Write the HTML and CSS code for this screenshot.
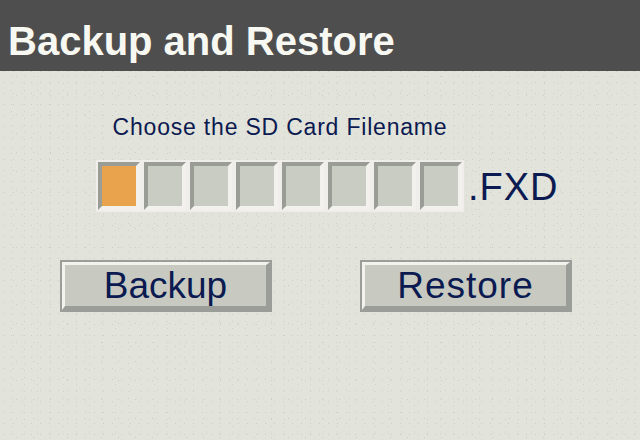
FILE: index.html
```html
<!DOCTYPE html>
<html>
<head>
<meta charset="utf-8">
<link rel="stylesheet" href="styles.css">
</head>
<body>
<div class="screen">
  <header class="titlebar"><h1 class="title">Backup and Restore</h1></header>
  <main class="content">
    <div class="picker">
      <div class="prompt">Choose the SD Card Filename</div>
      <div class="filename-row">
        <div class="slots">
          <div class="slot active"></div>
          <div class="slot"></div>
          <div class="slot"></div>
          <div class="slot"></div>
          <div class="slot"></div>
          <div class="slot"></div>
          <div class="slot"></div>
          <div class="slot"></div>
        </div>
        <span class="ext">.FXD</span>
      </div>
    </div>
    <div class="actions">
      <div class="btn"><div class="btn-face">Backup</div></div>
      <div class="btn"><div class="btn-face restore">Restore</div></div>
    </div>
  </main>
</div>
</body>
</html>
```

FILE: styles.css
```css
html, body {
  margin: 0;
  padding: 0;
}
body {
  width: 640px;
  height: 440px;
  overflow: hidden;
  font-family: "Liberation Sans", Arial, sans-serif;
}
.screen {
  width: 640px;
  height: 440px;
  background-color: #e2e3db;
  background-image:
    radial-gradient(circle, #cdcec6 0.7px, transparent 1px),
    radial-gradient(circle, #d0d1c9 0.7px, transparent 1px),
    radial-gradient(circle, #cccdc5 0.7px, transparent 1px);
  background-size: 9px 11px, 13px 7px, 17px 19px;
  background-position: 0 0, 5px 3px, 8px 10px;
}
.titlebar {
  height: 71px;
  box-sizing: border-box;
  background: #4e4e4e;
  padding: 22px 0 0 8px;
}
.title {
  margin: 0;
  font-size: 40px;
  line-height: 39px;
  font-weight: bold;
  color: #f8f8f2;
}
.content {
  padding-top: 45px;
}
.picker {
  margin-left: 96px;
  width: 368px;
}
.prompt {
  font-size: 23px;
  line-height: 23px;
  letter-spacing: 0.8px;
  color: #0b1a50;
  text-align: center;
}
.filename-row {
  display: flex;
  align-items: center;
  margin-top: 21px;
  width: 480px;
}
.slots {
  display: flex;
  gap: 4px;
  padding: 2px;
  background: #f0eeea;
}
.slot {
  width: 34px;
  height: 40px;
  border-top: 4px solid #9a9d96;
  border-left: 4px solid #9a9d96;
  border-right: 4px solid #f3f1ed;
  border-bottom: 4px solid #f3f1ed;
  background: #c9ccc2;
}
.slot.active {
  background: #e8a34c;
}
.ext {
  font-size: 38px;
  line-height: 37px;
  letter-spacing: 1px;
  color: #0b1a50;
  margin-left: 4px;
  padding-top: 3px;
}
.actions {
  display: flex;
  gap: 88px;
  margin-top: 48px;
  padding-left: 60px;
}
.btn {
  width: 212px;
  height: 52px;
  box-sizing: border-box;
  border: 2px solid #9b9e98;
}
.btn-face {
  height: 100%;
  box-sizing: border-box;
  border-top: 3px solid #f3f2ed;
  border-left: 3px solid #f3f2ed;
  border-right: 4px solid #9b9e98;
  border-bottom: 4px solid #9b9e98;
  background: #c8cac1;
  font-size: 37px;
  line-height: 41px;
  color: #0b1a50;
  text-align: center;
}
.btn-face.restore {
  letter-spacing: 1px;
}
```
